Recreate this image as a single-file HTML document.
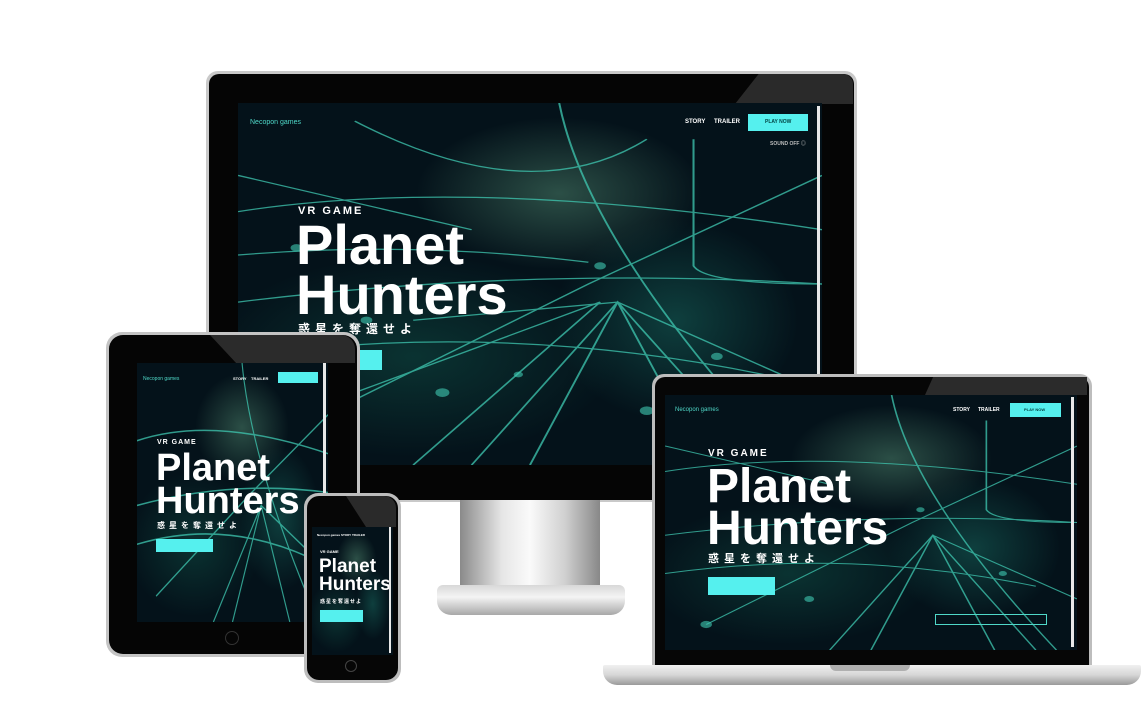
<!DOCTYPE html>
<html><head><meta charset="utf-8"><style>
*{margin:0;padding:0;box-sizing:border-box}
body{width:1142px;height:711px;background:#fff;position:relative;overflow:hidden;font-family:"Liberation Sans","Noto Sans CJK JP",sans-serif}
.abs{position:absolute}
.scr{position:absolute;overflow:hidden;background:#03111a;
background:radial-gradient(ellipse 35% 30% at 55% 25%,rgba(70,120,100,.6),transparent 70%),radial-gradient(ellipse 30% 40% at 75% 60%,rgba(30,130,115,.4),transparent 70%),radial-gradient(ellipse 50% 40% at 30% 70%,rgba(20,100,85,.4),transparent 70%),#04121a}
.scr svg{position:absolute;left:0;top:0;width:100%;height:100%}
.t{position:absolute;color:#fff;font-weight:bold;white-space:nowrap}
.c{position:absolute;color:#4fd8c8;white-space:nowrap}
.btn{position:absolute;background:#55f0ee}
.bar{position:absolute;background:#e8e8e8}
</style></head><body>

<!-- MONITOR -->
<div class="abs" style="left:206px;top:71px;width:651px;height:431px;border-radius:12px;background:#c9c9c9"></div>
<div class="abs" style="left:209px;top:74px;width:645px;height:426px;border-radius:10px;background:#050505"></div>
<div class="abs" style="left:735px;top:74px;width:118px;height:30px;background:#2a2a2a;clip-path:polygon(20% 0,100% 0,100% 100%,0 100%);border-top-right-radius:10px"></div>
<div class="abs" style="left:460px;top:500px;width:140px;height:92px;background:linear-gradient(90deg,#8a8a8a,#e6e6e6 30%,#fafafa 50%,#d0d0d0 75%,#888)"></div>
<div class="abs" style="left:437px;top:585px;width:188px;height:30px;border-radius:6px 6px 14px 14px;background:linear-gradient(#d8d8d8,#f4f4f4 40%,#a8a8a8)"></div>
<div class="scr" style="left:238px;top:103px;width:584px;height:362px">
<svg viewBox="0 0 100 100" preserveAspectRatio="none"><g stroke="#3fc9b2" stroke-width=".35" fill="none" opacity=".75"><path d="M0 30 Q40 20 100 35"/><path d="M0 55 Q50 45 100 50"/><path d="M10 90 L60 50 L100 20"/><path d="M40 100 L65 55 L80 100"/><path d="M55 0 Q60 40 95 100"/><path d="M0 70 Q45 60 90 75"/><path d="M20 5 Q50 30 70 10"/><path d="M78 10 L78 45 Q80 50 100 50"/><path d="M30 100 L62 55 L20 80"/><path d="M65 55 L100 80"/><path d="M65 55 L50 100"/><path d="M0 20 L40 35"/><path d="M0 42 Q30 38 60 44"/><path d="M65 55 L90 100"/><path d="M65 55 L30 60"/></g><g fill="#3fc9b2" opacity=".6"><circle cx="35" cy="80" r="1.2"/><circle cx="62" cy="45" r="1"/><circle cx="22" cy="60" r="1"/><circle cx="82" cy="70" r="1"/><circle cx="48" cy="75" r=".8"/><circle cx="10" cy="40" r="1"/><circle cx="70" cy="85" r="1.2"/></g></svg>
<div class="c" style="left:12px;top:16px;font-size:7px">Necopon games</div>
<div class="t" style="left:447px;top:16px;font-size:6px">STORY</div>
<div class="t" style="left:476px;top:16px;font-size:6px">TRAILER</div>
<div class="btn" style="left:510px;top:11px;width:60px;height:17px"></div>
<div class="t" style="left:527px;top:16px;font-size:5px;color:#044">PLAY NOW</div>
<div class="t" style="left:532px;top:37px;font-size:5px;color:#bbb">SOUND OFF ◎</div>
<div class="t" style="left:60px;top:102px;font-size:11px;letter-spacing:2px">VR GAME</div>
<div class="t" style="left:58px;top:117px;font-size:56px;line-height:50px">Planet<br>Hunters</div>
<div class="t" style="left:60px;top:217px;font-size:12px;letter-spacing:5px">惑星を奪還せよ</div>
<div class="btn" style="left:60px;top:247px;width:84px;height:20px"></div>
<div class="bar" style="left:579px;top:3px;width:3px;height:355px"></div>
</div>

<!-- LAPTOP -->
<div class="abs" style="left:652px;top:374px;width:440px;height:294px;border-radius:12px 12px 0 0;background:#bdbdbd"></div>
<div class="abs" style="left:655px;top:377px;width:434px;height:290px;border-radius:10px 10px 0 0;background:#060606"></div>
<div class="abs" style="left:925px;top:377px;width:162px;height:18px;background:#2b2b2b;clip-path:polygon(5% 0,100% 0,100% 100%,0 100%)"></div>
<div class="abs" style="left:603px;top:665px;width:538px;height:20px;border-radius:2px 2px 14px 14px;background:linear-gradient(#f0f0f0,#d6d6d6 50%,#9a9a9a)"></div>
<div class="abs" style="left:830px;top:665px;width:80px;height:6px;border-radius:0 0 6px 6px;background:#b0b0b0"></div>
<div class="scr" style="left:665px;top:395px;width:412px;height:255px">
<svg viewBox="0 0 100 100" preserveAspectRatio="none"><g stroke="#3fc9b2" stroke-width=".4" fill="none" opacity=".75"><path d="M0 30 Q40 20 100 35"/><path d="M0 55 Q50 45 100 50"/><path d="M10 90 L60 50 L100 20"/><path d="M40 100 L65 55 L80 100"/><path d="M55 0 Q60 40 95 100"/><path d="M0 70 Q45 60 90 75"/><path d="M78 10 L78 45 Q80 50 100 50"/><path d="M65 55 L100 80"/><path d="M65 55 L50 100"/><path d="M0 20 L40 35"/><path d="M65 55 L90 100"/></g><g fill="#3fc9b2" opacity=".6"><circle cx="35" cy="80" r="1.2"/><circle cx="62" cy="45" r="1"/><circle cx="82" cy="70" r="1"/><circle cx="10" cy="90" r="1.4"/></g></svg>
<div class="c" style="left:10px;top:12px;font-size:6px">Necopon games</div>
<div class="t" style="left:288px;top:12px;font-size:5px">STORY</div>
<div class="t" style="left:313px;top:12px;font-size:5px">TRAILER</div>
<div class="btn" style="left:345px;top:8px;width:51px;height:14px"></div>
<div class="t" style="left:359px;top:12px;font-size:4px;color:#044">PLAY NOW</div>
<div class="t" style="left:43px;top:53px;font-size:10px;letter-spacing:2px">VR GAME</div>
<div class="t" style="left:42px;top:71px;font-size:48px;line-height:42px">Planet<br>Hunters</div>
<div class="t" style="left:43px;top:155px;font-size:11px;letter-spacing:5px">惑星を奪還せよ</div>
<div class="btn" style="left:43px;top:182px;width:67px;height:18px"></div>
<div class="abs" style="left:270px;top:219px;width:112px;height:11px;border:1px solid #4fd8c8"></div>
<div class="bar" style="left:406px;top:2px;width:3px;height:250px"></div>
</div>

<!-- TABLET -->
<div class="abs" style="left:106px;top:332px;width:254px;height:325px;border-radius:16px;background:#c4c4c4"></div>
<div class="abs" style="left:109px;top:335px;width:248px;height:319px;border-radius:14px;background:#050505"></div>
<div class="abs" style="left:210px;top:335px;width:145px;height:28px;background:#2b2b2b;clip-path:polygon(0 0,100% 0,100% 100%,18% 100%);border-top-right-radius:14px"></div>
<div class="abs" style="left:225px;top:631px;width:14px;height:14px;border-radius:50%;border:1px solid #333"></div>
<div class="scr" style="left:137px;top:363px;width:191px;height:259px">
<svg viewBox="0 0 100 100" preserveAspectRatio="none"><g stroke="#3fc9b2" stroke-width=".6" fill="none" opacity=".75"><path d="M0 30 Q40 20 100 35"/><path d="M0 55 Q50 45 100 50"/><path d="M10 90 L60 50 L100 20"/><path d="M40 100 L65 55 L80 100"/><path d="M55 0 Q60 40 95 100"/><path d="M0 70 Q45 60 90 75"/><path d="M65 55 L100 80"/><path d="M65 55 L50 100"/></g></svg>
<div class="c" style="left:6px;top:13px;font-size:5px">Necopon games</div>
<div class="btn" style="left:141px;top:9px;width:40px;height:11px"></div>
<div class="t" style="left:96px;top:13px;font-size:4px">STORY&nbsp;&nbsp;&nbsp; TRAILER</div>
<div class="t" style="left:20px;top:76px;font-size:7px;letter-spacing:1px">VR GAME</div>
<div class="t" style="left:19px;top:89px;font-size:38px;line-height:33px">Planet<br>Hunters</div>
<div class="t" style="left:20px;top:157px;font-size:8px;letter-spacing:4px">惑星を奪還せよ</div>
<div class="btn" style="left:19px;top:176px;width:57px;height:13px"></div>
<div class="bar" style="left:186px;top:0;width:3px;height:256px"></div>
</div>

<!-- PHONE -->
<div class="abs" style="left:304px;top:493px;width:97px;height:190px;border-radius:14px;background:#bdbdbd"></div>
<div class="abs" style="left:307px;top:496px;width:91px;height:184px;border-radius:12px;background:#060606"></div>
<div class="abs" style="left:346px;top:496px;width:50px;height:31px;background:#2a2a2a;clip-path:polygon(0 0,100% 0,100% 100%,40% 100%);border-top-right-radius:12px"></div>
<div class="abs" style="left:345px;top:660px;width:12px;height:12px;border-radius:50%;border:1px solid #444"></div>
<div class="scr" style="left:312px;top:527px;width:81px;height:128px">
<div class="t" style="left:5px;top:6px;font-size:3px">Necopon games STORY TRAILER</div>
<div class="t" style="left:8px;top:22px;font-size:4px">VR GAME</div>
<div class="t" style="left:7px;top:31px;font-size:19px;line-height:18px">Planet<br>Hunters</div>
<div class="t" style="left:8px;top:71px;font-size:5px;letter-spacing:1px">惑星を奪還せよ</div>
<div class="btn" style="left:8px;top:83px;width:43px;height:12px"></div>
<div class="bar" style="left:77px;top:0;width:2px;height:126px"></div>
</div>
</body></html>
